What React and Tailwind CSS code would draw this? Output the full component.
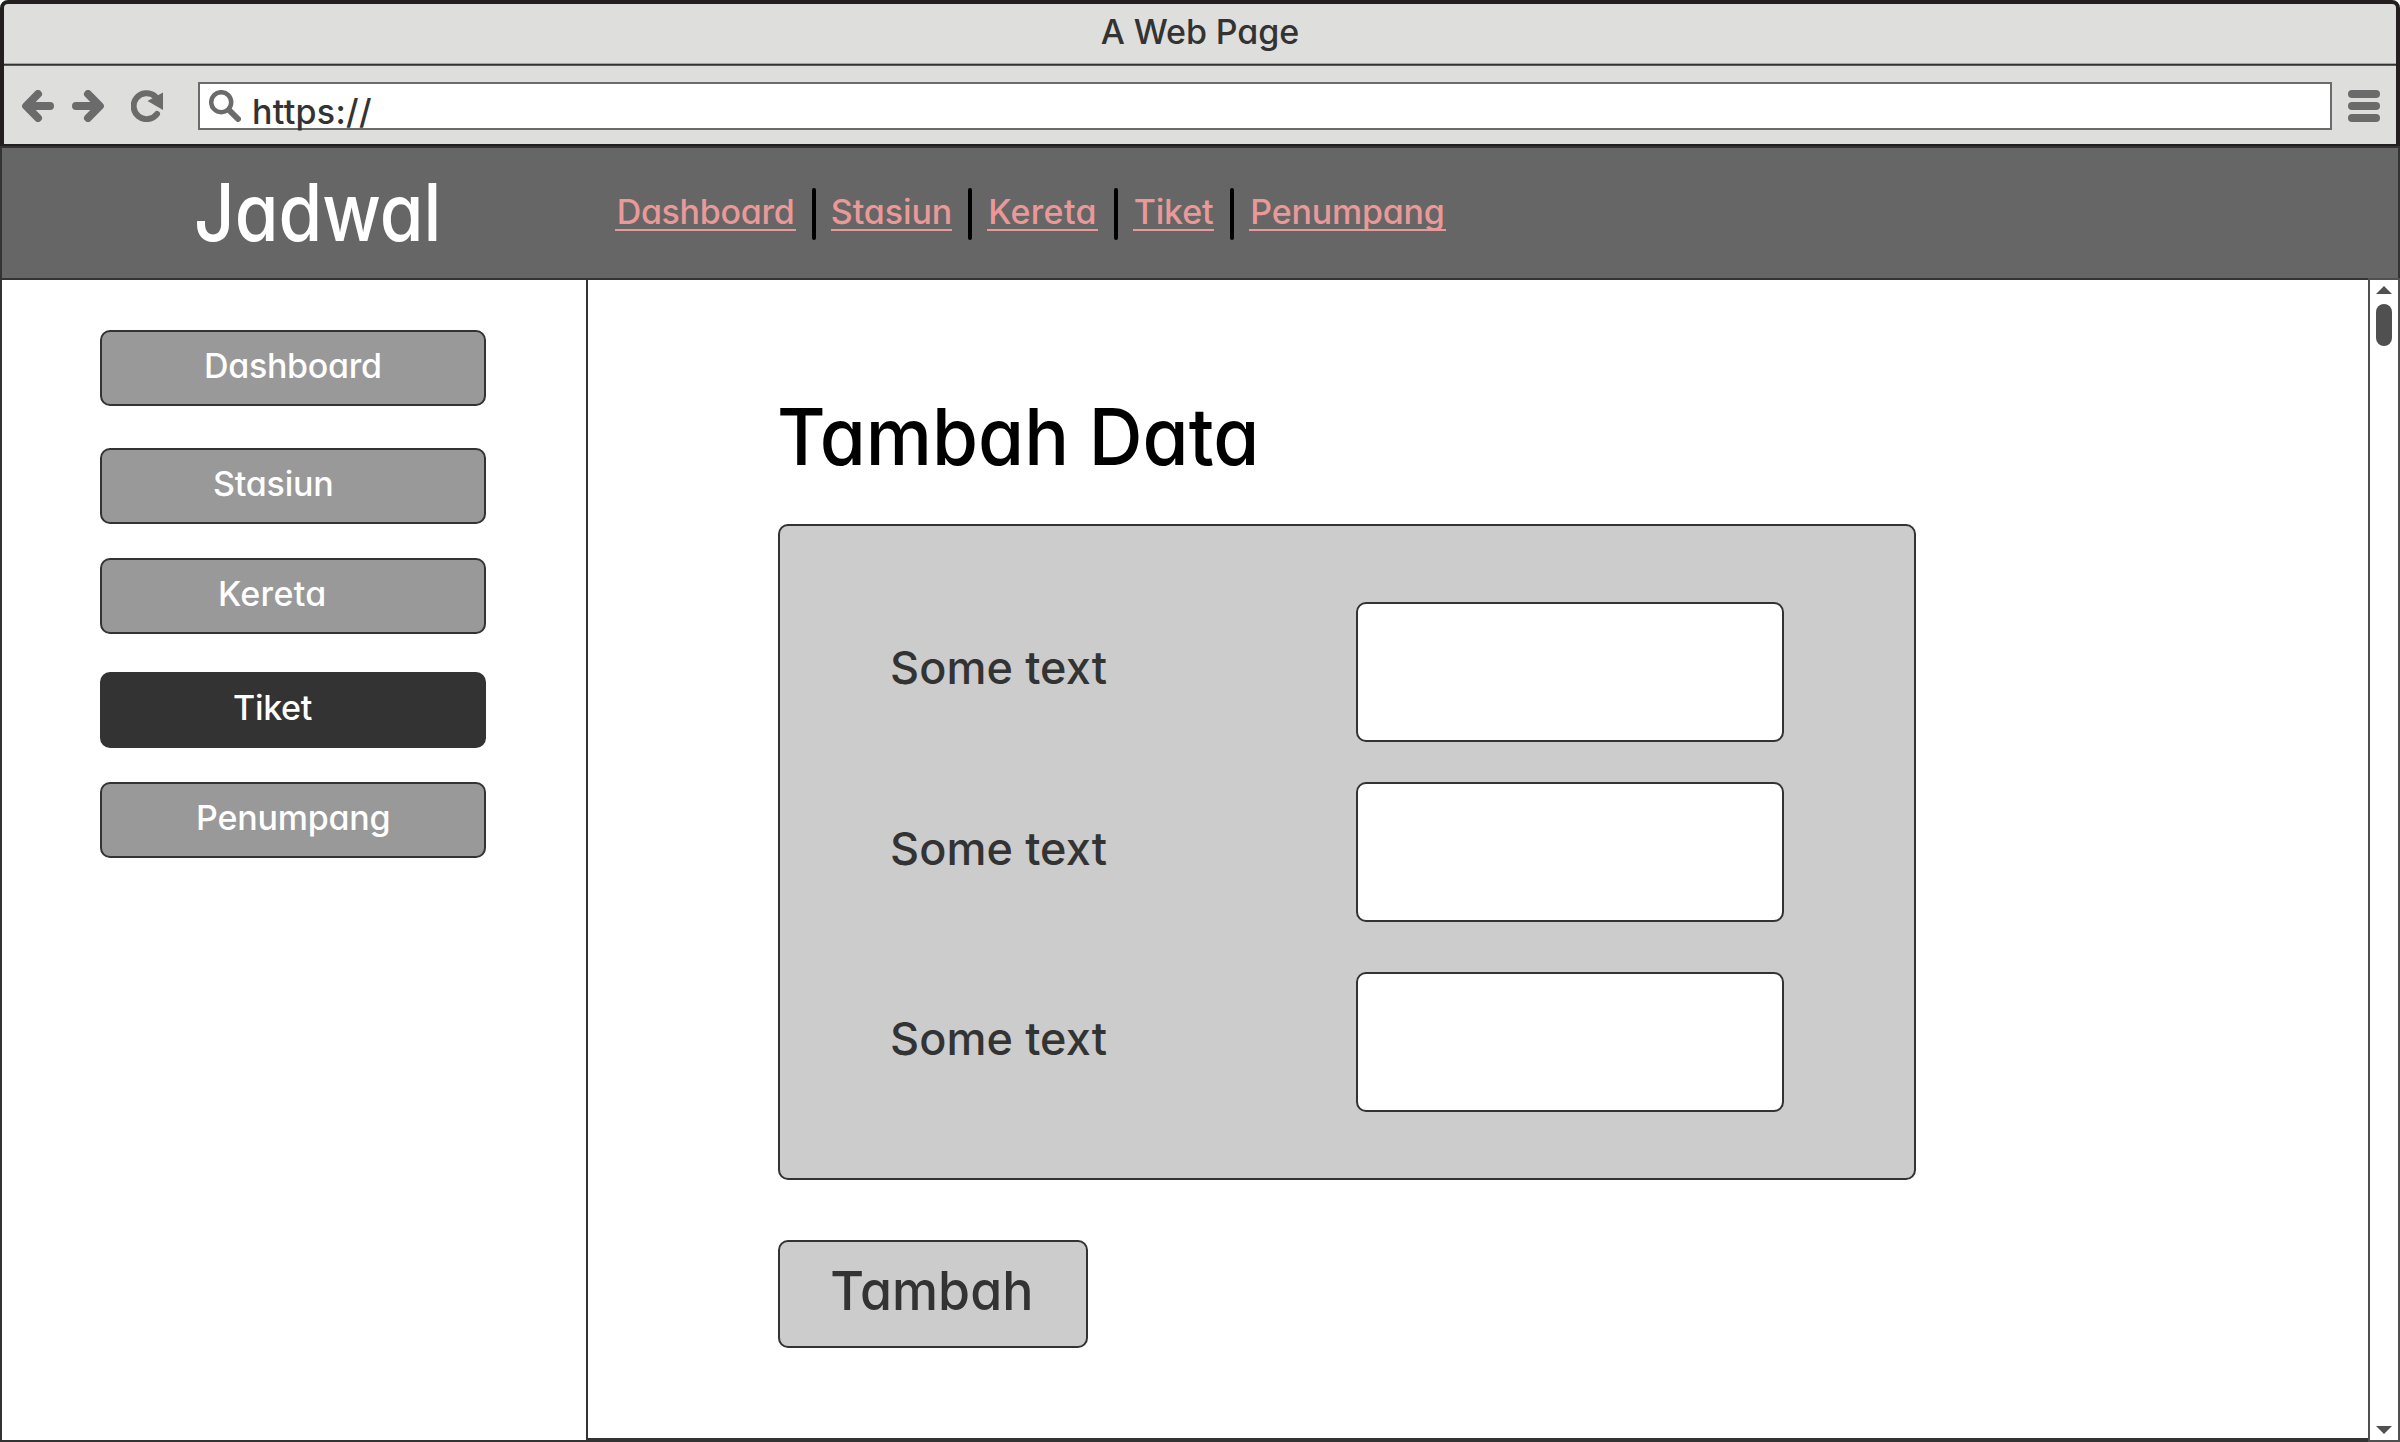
import React from "react";

const navLinks = [
  { label: "Dashboard", size: "w-[181px] tracking-[-0.3px]" },
  { label: "Stasiun", size: "w-[121px] tracking-[-0.1px]" },
  { label: "Kereta", size: "w-[111px] tracking-[0.3px]" },
  { label: "Tiket", size: "w-[81px] tracking-[-0.2px]" },
  { label: "Penumpang", size: "w-[197px] tracking-[-0.2px]" },
];

const menuItems = [
  { label: "Dashboard", place: "pl-[102px] tracking-[-0.3px]" },
  { label: "Stasiun", place: "mt-[42px] pl-[111px] tracking-[-0.2px]" },
  { label: "Kereta", place: "mt-[34px] pl-[116px] tracking-[0.3px]" },
  { label: "Tiket", place: "mt-[38px] pl-[131px] tracking-[-0.3px]", active: true },
  { label: "Penumpang", place: "mt-[34px] pl-[94px] tracking-[-0.2px]" },
];

const fields = [
  { space: "", label: "pb-[10px]" },
  { space: "mt-10", label: "pb-[8px]" },
  { space: "mt-[50px]", label: "pb-[8px]" },
];

function BackIcon({ className = "" }) {
  return (
    <svg viewBox="0 0 32 32" className={`size-8 shrink-0 ${className}`} fill="none" stroke="#6b6b6b" strokeWidth="8" strokeLinecap="round" strokeLinejoin="round">
      <path d="M28 16H6M16 4L4.200 16L16 28" />
    </svg>
  );
}

function ReloadIcon() {
  return (
    <svg viewBox="0 0 32 32" className="ml-[27px] size-8 shrink-0">
      <path d="M26 24A13 13 0 1 1 24 6.200" fill="none" stroke="#6b6b6b" strokeWidth="6" strokeLinecap="round" />
      <path d="M32 2.500V20L16.500 11Z" fill="#6b6b6b" />
    </svg>
  );
}

function SearchIcon() {
  return (
    <svg viewBox="0 0 32 32" className="size-8 shrink-0" fill="none" stroke="#6b6b6b" strokeLinecap="round">
      <circle cx="12.200" cy="12.200" r="10" strokeWidth="4.500" />
      <path d="M20.500 20.500L29 29" strokeWidth="6" />
    </svg>
  );
}

function Browser() {
  return (
    <div className="flex h-[146px] shrink-0 flex-col rounded-t-lg border-4 border-b-2 border-[#231f20] bg-[#dededc]">
      <div className="flex h-[59px] items-center justify-center pb-[3px] text-[34px] leading-none tracking-[-0.1px]">A Web Page</div>
      <div className="h-px bg-[#a5a5a4]" />
      <div className="h-px bg-[#333333]" />
      <div className="h-px bg-[#5c5c5c]" />
      <div className="flex h-[78px] items-center pt-0.5 pr-4 pl-[18px]">
        <BackIcon />
        <BackIcon className="ml-[18px] rotate-180" />
        <ReloadIcon />
        <div className="ml-[35px] flex h-12 flex-1 items-center border-2 border-[#6b6b6b] bg-white pl-[9px]">
          <SearchIcon />
          <span className="mt-[11px] ml-[11px] text-[34px] leading-none tracking-[0.3px]">https://</span>
        </div>
        <div className="ml-4 flex w-8 flex-col gap-1">
          <div className="h-2 rounded-full bg-[#6b6b6b]" />
          <div className="h-2 rounded-full bg-[#6b6b6b]" />
          <div className="h-2 rounded-full bg-[#6b6b6b]" />
        </div>
      </div>
    </div>
  );
}

function Header() {
  return (
    <header className="flex h-[134px] shrink-0 items-center border-2 border-[#333333] bg-[#666666]">
      <div className="w-[613px] pb-[3px] pl-[192px] text-[80px] leading-none text-white">
        <span className="inline-block origin-left scale-x-[0.885]">Jadwal</span>
      </div>
      <nav className="flex items-center text-[34px] leading-[34px] text-[#ea9999]">
        {navLinks.map((link, i) => (
          <React.Fragment key={link.label}>
            {i > 0 && <div className="mr-[15px] ml-4 h-[52px] w-1 translate-y-px rounded-xs bg-black" />}
            <a className={`flex justify-center border-b-2 border-[#ea9999] whitespace-nowrap ${link.size}`}>{link.label}</a>
          </React.Fragment>
        ))}
      </nav>
    </header>
  );
}

function Sidebar() {
  return (
    <aside className="flex w-[588px] flex-col border-x-2 border-b-2 border-[#333333] bg-white pt-[50px] pl-[98px]">
      {menuItems.map((item) => (
        <button
          key={item.label}
          className={`flex h-[76px] w-[386px] items-center rounded-[10px] border-2 border-[#333333] pb-[4px] text-[34px] leading-none text-white ${item.active ? "bg-[#333333]" : "bg-[#999999]"} ${item.place}`}
        >
          {item.label}
        </button>
      ))}
    </aside>
  );
}

function Content() {
  return (
    <main className="flex flex-1 flex-col items-start border-b-4 border-[#333333] bg-white pl-[190px]">
      <h1 className="mt-[116px] -ml-px origin-left scale-x-[0.943] text-[79px] leading-[80px] font-medium text-black">Tambah Data</h1>
      <section className="mt-12 h-[656px] w-[1138px] rounded-[10px] border-2 border-[#333333] bg-[#cccccc] pt-[76px] pl-[110px]">
        {fields.map((field, i) => (
          <div key={i} className={`flex h-[140px] items-center ${field.space}`}>
            <label className={`w-[466px] text-[45px] leading-none tracking-[0.1px] ${field.label}`}>Some text</label>
            <div className="h-[140px] w-[428px] rounded-[10px] border-2 border-[#333333] bg-white" />
          </div>
        ))}
      </section>
      <button className="mt-[60px] flex h-[108px] w-[310px] items-center justify-center rounded-[10px] border-2 border-[#333333] bg-[#cccccc] pr-0.5 pb-[6px] text-[54px] leading-none">
        <span className="scale-x-[0.96]">Tambah</span>
      </button>
    </main>
  );
}

function Scrollbar() {
  return (
    <div className="-mt-0.5 flex w-8 flex-col items-center border-2 border-[#505050] bg-white pt-1.5 pb-1.5">
      <svg viewBox="0 0 16 8" className="h-2 w-4" fill="#505050">
        <path d="M8 0L16 8H0Z" />
      </svg>
      <div className="mt-2.5 h-[42px] w-4 rounded-full bg-[#505050]" />
      <svg viewBox="0 0 16 8" className="mt-auto h-2 w-4" fill="#505050">
        <path d="M0 0H16L8 8Z" />
      </svg>
    </div>
  );
}

export default function App() {
  return (
    <div className="flex h-[1442px] w-[2400px] flex-col overflow-hidden bg-white font-['Inter',sans-serif] font-medium text-[#333333] [font-feature-settings:'cv11']">
      <Browser />
      <Header />
      <div className="flex flex-1">
        <Sidebar />
        <Content />
        <Scrollbar />
      </div>
    </div>
  );
}
